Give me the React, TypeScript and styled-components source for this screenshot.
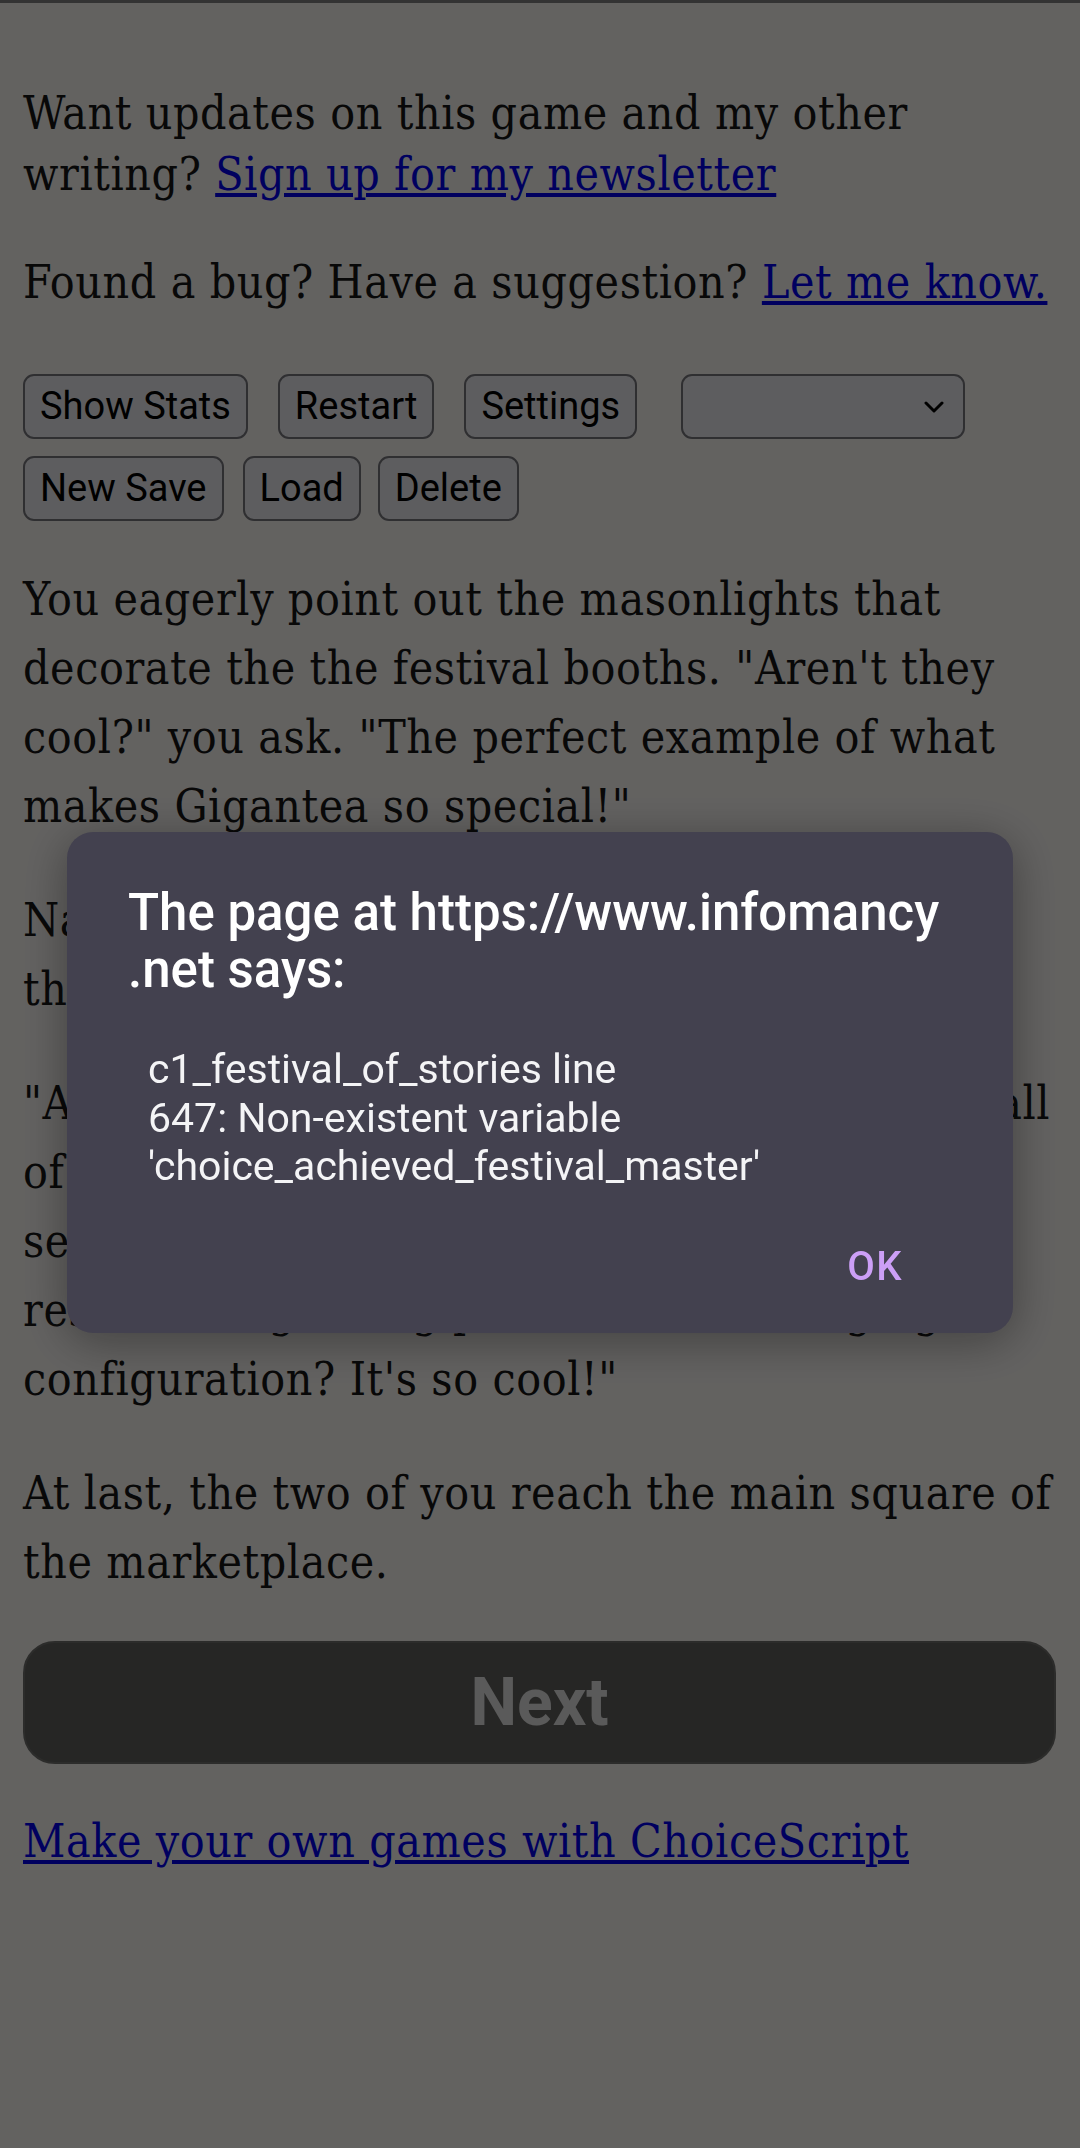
import React from "react";
import styled, { createGlobalStyle } from "styled-components";

const GlobalStyle = createGlobalStyle`
  html, body { margin: 0; padding: 0; }
  body { background: #f7f4f1; }
`;

const serif = `"DejaVu Serif Condensed", "DejaVu Serif", serif`;
const sans = `Roboto, "Noto Sans", sans-serif`;

const Page = styled.main`
  min-height: 2148px;
  box-sizing: border-box;
  border-top: 3px solid #808080;
  padding: 80px 24px 0 23px;
  font-family: ${serif};
  font-size: 46px;
  letter-spacing: 0.6px;
  color: #161616;
`;

const Note = styled.p`
  margin: 0 0 47px;
  line-height: 61px;
`;

const Link = styled.a`
  color: #0000ee;
  text-decoration: underline;
`;

const Toolbar = styled.div`
  display: flex;
  flex-direction: column;
  gap: 17px;
  margin-top: 61px;
`;

const Row = styled.div`
  display: flex;
  align-items: center;
`;

const Btn = styled.button<{ $gap?: number }>`
  box-sizing: border-box;
  height: 65px;
  margin: 0 0 0 ${(p) => p.$gap ?? 0}px;
  font-family: ${sans};
  font-size: 38px;
  line-height: 45px;
  letter-spacing: normal;
  padding: 0 15px;
  color: #000;
  background: #e9e9ed;
  border: 2px solid #76767c;
  border-radius: 11px;
`;

const Select = styled.div<{ $gap?: number }>`
  margin-left: ${(p) => p.$gap ?? 0}px;
  box-sizing: border-box;
  width: 284px;
  height: 65px;
  display: flex;
  align-items: center;
  justify-content: flex-end;
  padding-right: 19px;
  background: #e9e9ed;
  border: 2px solid #76767c;
  border-radius: 11px;
`;

const Story = styled.div`
  display: flex;
  flex-direction: column;
  gap: 45px;
  margin: 44px -12px 0 0;
`;

const Para = styled.p`
  margin: 0;
  line-height: 69px;
`;

const NextButton = styled.button`
  display: block;
  box-sizing: border-box;
  width: 100%;
  height: 123px;
  margin-top: 44px;
  background: #5f5f5c;
  color: #e1e1e1;
  border: 2px solid #6f6f6c;
  border-radius: 32px;
  font-family: ${sans};
  font-weight: 700;
  font-size: 66px;
  letter-spacing: normal;
  padding: 0;
`;

const Footer = styled.p`
  margin: 43px 0 0;
  line-height: 69px;
`;

const Overlay = styled.div`
  position: fixed;
  inset: 0;
  background: rgba(0, 0, 0, 0.6);
  z-index: 10;
`;

const Dialog = styled.div`
  position: fixed;
  top: 832px;
  left: 67px;
  width: 946px;
  box-sizing: border-box;
  background: #43414f;
  border-radius: 26px;
  box-shadow: 0 8px 48px rgba(0, 0, 0, 0.35);
  padding-top: 52px;
  z-index: 20;
  font-family: ${sans};
  color: #fff;
`;

const Title = styled.h2`
  margin: 0;
  padding: 0 30px 0 61px;
  font-size: 51px;
  font-weight: 500;
  line-height: 57px;
  white-space: nowrap;
`;

const Message = styled.p`
  margin: 47px 0 0;
  padding: 0 40px 0 81px;
  font-size: 41px;
  line-height: 48.5px;
  font-weight: 400;
  color: #f4f4f6;
`;

const Actions = styled.div`
  display: flex;
  justify-content: flex-end;
  padding: 54px 110px 44px 0;
`;

const OkButton = styled.button`
  background: none;
  border: 0;
  padding: 0;
  font-family: ${sans};
  font-weight: 500;
  font-size: 40px;
  line-height: 44.5px;
  letter-spacing: 1.5px;
  color: #cc9ff6;
`;

const Chevron = () => (
  <svg width="20" height="12" viewBox="0 0 20 12" fill="none">
    <path d="M2 2 L10 10 L18 2" stroke="#000" strokeWidth="3" strokeLinecap="round" strokeLinejoin="round" />
  </svg>
);

export default function App() {
  return (
    <>
      <GlobalStyle />
      <Page>
        <Note>
          Want updates on this game and my other writing? <Link href="#">Sign up for my newsletter</Link>
        </Note>
        <Note>
          Found a bug? Have a suggestion? <Link href="#">Let me know.</Link>
        </Note>
        <Toolbar>
          <Row>
            <Btn>Show Stats</Btn>
            <Btn $gap={30}>Restart</Btn>
            <Btn $gap={30}>Settings</Btn>
            <Select $gap={44}>
              <Chevron />
            </Select>
          </Row>
          <Row>
            <Btn>New Save</Btn>
            <Btn $gap={19}>Load</Btn>
            <Btn $gap={17}>Delete</Btn>
          </Row>
        </Toolbar>
        <Story>
          <Para>
            You eagerly point out the masonlights that decorate the the festival booths. "Aren't they cool?" you ask. "The perfect example of what makes Gigantea so special!"
          </Para>
          <Para>
            Nadia nods, though her eyes are elsewhere,
            <br />
            the crowd drawing her attention away.
          </Para>
          <Para>
            "And have you seen the arch? They light up,{"\u2002"}all
            <br />
            of them at once when the bells ring. The
            <br />
            servitors tune them every morning, and the
            <br />
            results are glowing patterns in a changing
            <br />
            configuration? It's so cool!"
          </Para>
          <Para>At last, the two of you reach the main square of the marketplace.</Para>
        </Story>
        <NextButton>Next</NextButton>
        <Footer>
          <Link href="#">Make your own games with ChoiceScript</Link>
        </Footer>
      </Page>
      <Overlay />
      <Dialog role="alertdialog">
        <Title>
          The page at https://www.infomancy
          <br />
          .net says:
        </Title>
        <Message>
          c1_festival_of_stories line
          <br />
          647: Non-existent variable
          <br />
          'choice_achieved_festival_master'
        </Message>
        <Actions>
          <OkButton>OK</OkButton>
        </Actions>
      </Dialog>
    </>
  );
}
